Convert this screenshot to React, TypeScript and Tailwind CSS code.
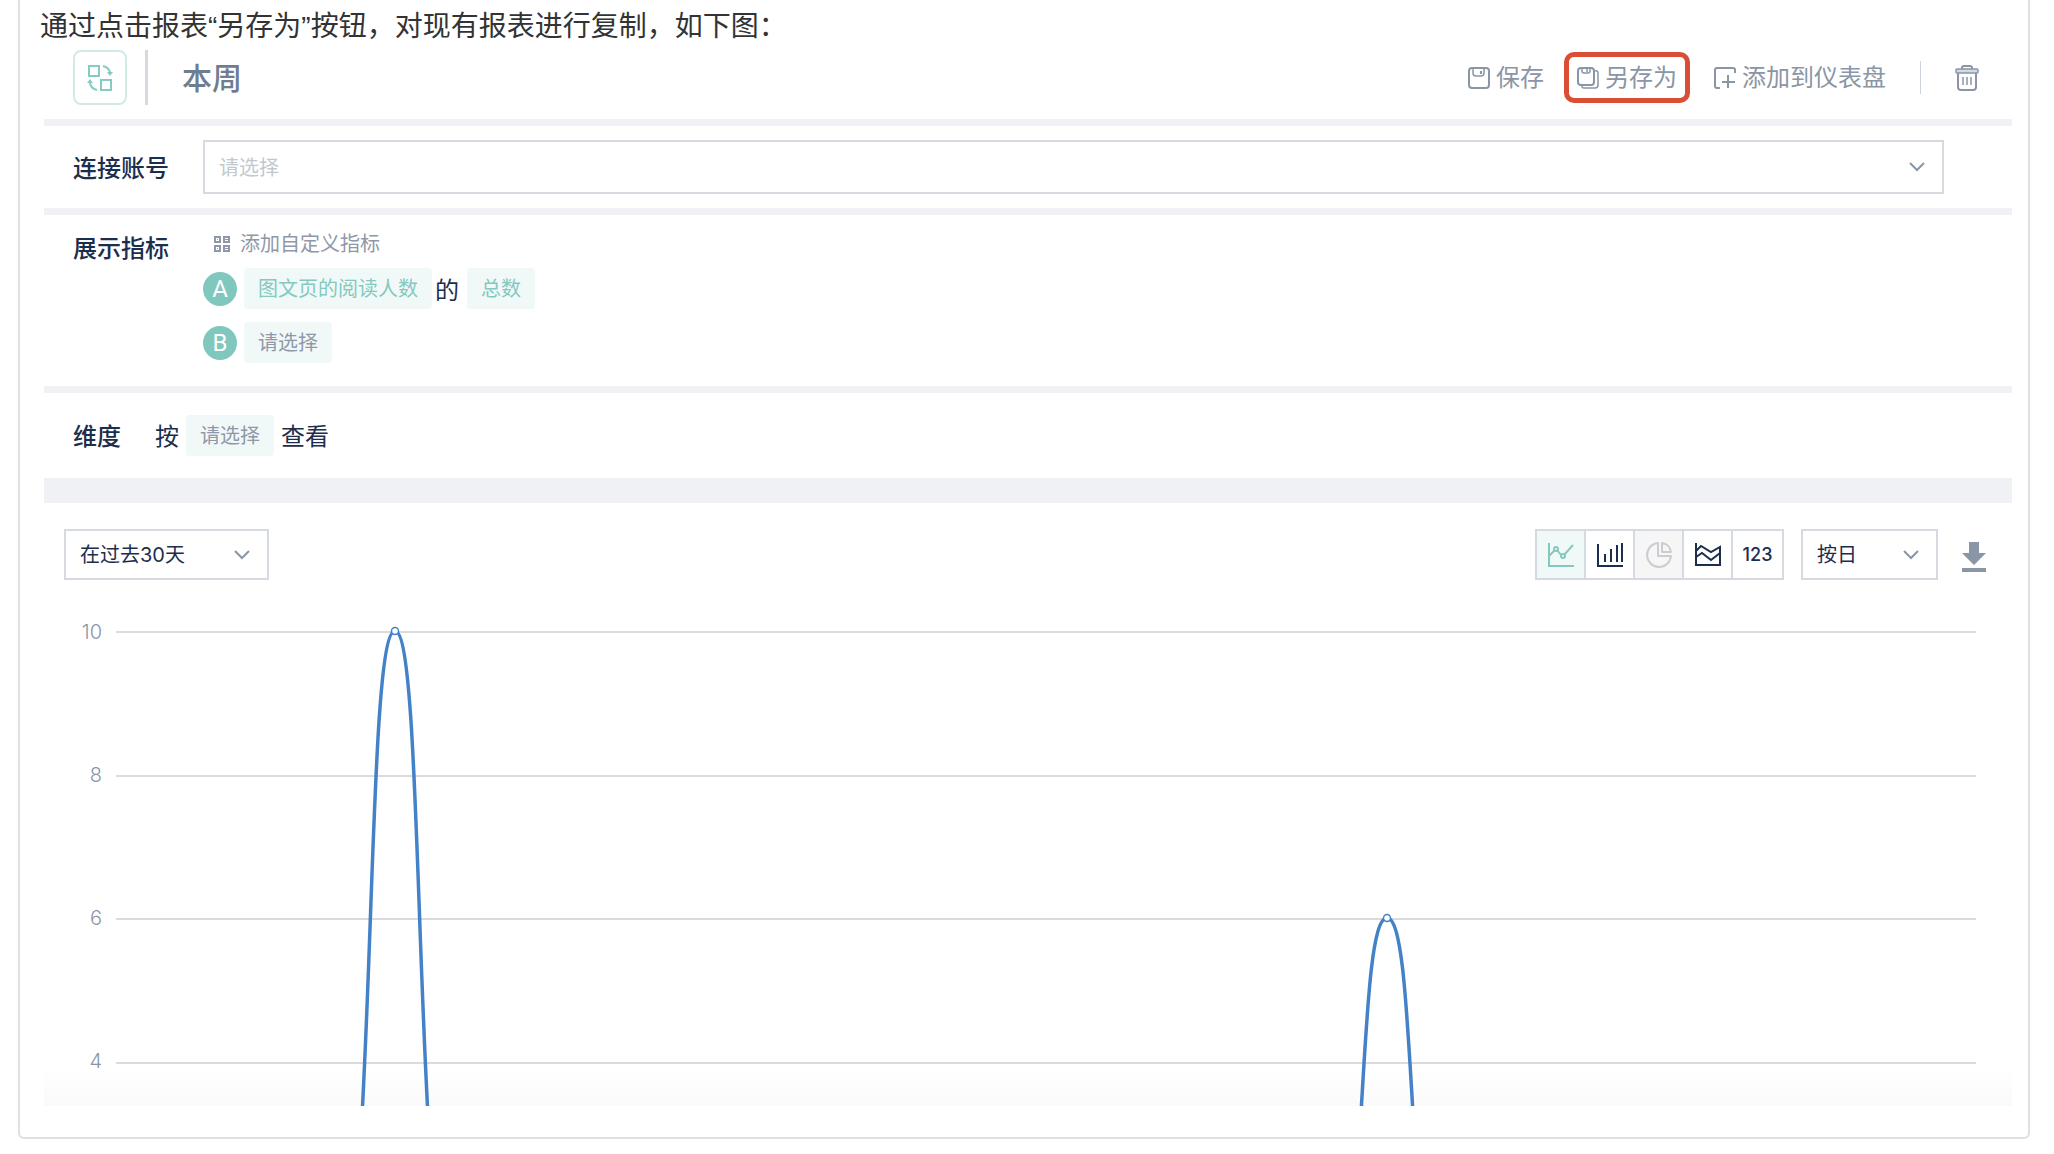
import { ReactNode, useState } from 'react';

const DAYS = 30;
const VALUES: Record<number, number> = { 4: 10, 20: 6 };
const TICKS = [10, 8, 6, 4];

// Plot units: one day is 62 wide, one count is 72 high
const PLOT_WIDTH = 1860;
const PLOT_HEIGHT = 492;
const DAY = PLOT_WIDTH / DAYS;
const TOP = 17;
const yOf = (value: number) => TOP + Math.round((10 - value) * 71.75);
const xOf = (day: number) => (day + 0.5) * DAY;

// Smooth line: flat at the peaks, steep near the baseline
function buildCurve() {
  let d = `M${xOf(0)} ${yOf(0)}`;
  for (let day = 1; day < DAYS; day++) {
    const from = VALUES[day - 1] ?? 0;
    const to = VALUES[day] ?? 0;
    const x0 = xOf(day - 1);
    const x1 = xOf(day);
    const low = Math.max(from, to) * 0.15;
    if (to > from) {
      d += ` C${x1 - 17} ${yOf(low)} ${x1 - 31} ${yOf(to)} ${x1} ${yOf(to)}`;
    } else if (from > to) {
      d += ` C${x0 + 31} ${yOf(from)} ${x0 + 17} ${yOf(low)} ${x1} ${yOf(to)}`;
    } else {
      d += ` L${x1} ${yOf(to)}`;
    }
  }
  return d;
}

function SwapIcon() {
  return (
    <svg viewBox="0 0 26 28" className="w-[26px] h-7" fill="none" stroke="currentColor" strokeWidth="2">
      <rect x="2" y="2" width="10" height="10" />
      <rect x="14" y="16" width="10" height="10" />
      <path d="M16 2c4 1 7 4 7 8" />
      <path d="M10 26c-4-1-7-4-7-8" />
      <path d="M20 8h6l-3 4z M0 19h6l-3-4z" fill="currentColor" stroke="none" />
    </svg>
  );
}

function SaveIcon() {
  return (
    <svg viewBox="0 0 22 22" className="w-[22px] h-[22px]" fill="none" stroke="currentColor" strokeWidth="2">
      <rect x="1" y="1" width="20" height="20" rx="3" />
      <path d="M5 1v5a3 3 0 0 0 3 3h5a3 3 0 0 0 3-3V1" strokeWidth="1.5" />
      <path d="M13 4v3" />
    </svg>
  );
}

function SaveAsIcon() {
  return (
    <svg viewBox="0 0 22 22" className="w-[22px] h-[22px]" fill="none" stroke="currentColor" strokeWidth="2">
      <rect x="1" y="1" width="16" height="17" rx="3" />
      <path d="M5 1v3a2 2 0 0 0 2 2h4a2 2 0 0 0 2-2V1M10 2v3" strokeWidth="1.5" />
      <path d="M18 4a2 2 0 0 1 3 2v12a3 3 0 0 1-3 3H7a2 2 0 0 1-2-2" strokeWidth="1.5" />
    </svg>
  );
}

function AddBoardIcon() {
  return (
    <svg viewBox="0 0 22 22" className="w-[22px] h-[22px]" fill="none" stroke="currentColor" strokeWidth="2">
      <path d="M21 6V3a2 2 0 0 0-2-2H3a2 2 0 0 0-2 2v16a2 2 0 0 0 2 2h3" />
      <path d="M14 8v13M8 15h13" />
    </svg>
  );
}

function TrashIcon() {
  return (
    <svg viewBox="0 0 24 26" className="w-6 h-[26px]" fill="none" stroke="currentColor" strokeWidth="2">
      <path d="M7 4V3a2 2 0 0 1 2-2h6a2 2 0 0 1 2 2v1" />
      <rect x="1" y="4" width="22" height="4" rx="1" fill="#d5dae0" strokeWidth="1.5" />
      <path d="M3 8v14a3 3 0 0 0 3 3h12a3 3 0 0 0 3-3V8" />
      <path d="M8 12v8M12 12v8M16 12v8" strokeWidth="1.5" />
    </svg>
  );
}

function MetricIcon() {
  return (
    <svg viewBox="0 0 16 16" className="w-4 h-4" fill="none" stroke="currentColor" strokeWidth="2">
      <rect x="1" y="1" width="5" height="5" />
      <rect x="10" y="1" width="5" height="5" />
      <rect x="1" y="10" width="5" height="5" />
      <rect x="10" y="10" width="5" height="5" />
      <path d="M3 3.5h1M11 3.5h3M3 12.5h1M11 12.5h3" strokeWidth="1" />
    </svg>
  );
}

function Chevron() {
  return (
    <svg viewBox="0 0 16 10" className="w-4 h-[10px] text-[#8a95a5]" fill="none" stroke="currentColor" strokeWidth="2">
      <path d="M1 1l7 7 7-7" />
    </svg>
  );
}

function LineIcon() {
  return (
    <svg viewBox="0 0 26 26" className="w-[26px] h-[26px]" fill="none" stroke="currentColor" strokeWidth="2">
      <path d="M1 1v23h25" />
      <path d="M1 14l6-6M9 8l4 5M16 13l9-10" />
      <circle cx="8" cy="7" r="2" />
      <circle cx="15" cy="14" r="2" />
    </svg>
  );
}

function BarIcon() {
  return (
    <svg viewBox="0 0 26 26" className="w-[26px] h-[26px]" fill="none" stroke="currentColor" strokeWidth="2">
      <path d="M1 2v22h25M8 12v8M14 7v13M20 3v17M25 1v19" />
    </svg>
  );
}

function PieIcon() {
  return (
    <svg viewBox="0 0 28 28" className="w-7 h-7" fill="none" stroke="currentColor" strokeWidth="2" strokeLinejoin="round">
      <path d="M13 2a12 12 0 1 0 13 13H13z" />
      <path d="M17 2v9h9a10 10 0 0 0-9-9z" />
    </svg>
  );
}

function AreaIcon() {
  return (
    <svg viewBox="0 0 26 26" className="w-[26px] h-[26px]" fill="none" stroke="currentColor" strokeWidth="2">
      <path d="M1 1v22h24V5l-9 5-10-6-5 5" />
      <path d="M1 15l6-4 9 7 9-7" />
    </svg>
  );
}

function DownloadIcon() {
  return (
    <svg viewBox="0 0 24 30" className="w-6 h-[30px]" fill="currentColor">
      <path d="M7 0h10v11h7L12 23 0 11h7z" />
      <rect x="0" y="26" width="24" height="4" />
    </svg>
  );
}

function Pill({ children, muted = false }: { children: ReactNode; muted?: boolean }) {
  return (
    <button
      className={`h-[41px] px-[14px] rounded bg-[#f1f9f8] text-xl leading-6 ${
        muted ? 'text-[#8f98a8]' : 'text-[#84c9c0]'
      }`}
    >
      {children}
    </button>
  );
}

function Badge({ children }: { children: ReactNode }) {
  return (
    <span className="w-[34px] h-[34px] mr-[7px] rounded-full bg-[#80c7be] text-white text-2xl leading-[34px] text-center font-['Roboto']">
      {children}
    </span>
  );
}

interface SelectBoxProps {
  label: string;
  options: string[];
  className: string;
  placeholder?: boolean;
}

function SelectBox({ label, options, className, placeholder = false }: SelectBoxProps) {
  return (
    <div className={`grid items-center ${className}`}>
      <select
        aria-label={label}
        className={`col-start-1 row-start-1 w-full h-full appearance-none bg-white border-2 border-[#d5dae0] px-[14px] text-xl font-['Inter','Noto_Sans_CJK_SC',sans-serif] ${
          placeholder ? 'pt-[2px] text-[#c3c8ce]' : 'text-[#1c2e4d]'
        }`}
      >
        {options.map((option) => (
          <option key={option}>{option}</option>
        ))}
      </select>
      <span className="col-start-1 row-start-1 justify-self-end mr-[19px] pointer-events-none">
        <Chevron />
      </span>
    </div>
  );
}

const CHART_TYPES = [
  { id: 'line', label: '折线图', icon: <LineIcon /> },
  { id: 'bar', label: '柱状图', icon: <BarIcon /> },
  { id: 'pie', label: '饼图', icon: <PieIcon />, disabled: true },
  { id: 'area', label: '面积图', icon: <AreaIcon /> },
  { id: 'number', label: '数值', icon: <span className="text-lg font-medium font-['Inter']">123</span> },
];

function ReportHeader() {
  return (
    <header className="flex items-center h-[81px] pt-3 pb-[14px] pl-[29px] pr-[33px] text-2xl text-[#8a95a5]">
      <button
        aria-label="切换"
        className="w-[54px] h-[55px] flex items-center justify-center border-2 border-[#cfeae7] rounded-lg text-[#86cac2]"
      >
        <SwapIcon />
      </button>
      <span className="w-[3px] h-[55px] ml-[18px] bg-[#d5dae0]" />
      <h1 className="ml-[34px] pt-[2px] text-3xl font-medium text-[#6f7d91]">本周</h1>
      <div className="ml-auto flex items-center">
        <button className="flex items-center gap-[6px]">
          <SaveIcon />
          保存
        </button>
        <button className="ml-5 h-[51px] px-2 flex items-center gap-[6px] border-5 border-[#d94e34] rounded-[10px]">
          <SaveAsIcon />
          另存为
        </button>
        <button className="ml-6 flex items-center gap-[6px]">
          <AddBoardIcon />
          添加到仪表盘
        </button>
        <span className="w-px h-[33px] mx-[34px] bg-[#cdd3da]" />
        <button aria-label="删除">
          <TrashIcon />
        </button>
      </div>
    </header>
  );
}

function Chart() {
  return (
    <div className="flex h-[492px] overflow-hidden mt-[34px] pr-9">
      <div className="w-[72px] shrink-0 pr-[14px] pt-1 text-right text-xl font-light text-[#8a95a5] font-['Inter']">
        {TICKS.map((tick) => (
          <div key={tick} className="h-[143px] leading-7">
            {tick}
          </div>
        ))}
      </div>
      <svg
        viewBox={`0 0 ${PLOT_WIDTH} ${PLOT_HEIGHT}`}
        preserveAspectRatio="none"
        className="flex-1 min-w-0 h-full"
        role="img"
        aria-label="图文页的阅读人数"
      >
        {TICKS.map((tick) => (
          <path key={tick} d={`M0 ${yOf(tick) + 1}H${PLOT_WIDTH}`} stroke="#d9dbdd" strokeWidth="2" />
        ))}
        <path d={buildCurve()} fill="none" stroke="#4482c8" strokeWidth="3.5" />
        {Object.entries(VALUES).map(([day, value]) => (
          <circle key={day} cx={xOf(Number(day))} cy={yOf(value)} r="3.5" fill="#fff" stroke="#4482c8" strokeWidth="1.5" />
        ))}
      </svg>
    </div>
  );
}

export default function App() {
  const [chartType, setChartType] = useState('line');

  return (
    <div className="bg-white pb-[15px] font-['Liberation_Sans','Noto_Sans_CJK_SC',sans-serif]">
      <main className="mr-6 ml-[18px] border-2 border-t-0 border-[#e0dfe6] rounded-b-md pl-6 pr-4 pb-[31px]">
        <p className="-ml-1 h-[38px] pt-[6px] text-[28px] leading-[42px] text-[#333]">
          通过点击报表“另存为”按钮，对现有报表进行复制，如下图：
        </p>

        <section className="text-[#1c2e4d]">
          <ReportHeader />

          {/* Account */}
          <div className="flex items-center h-[96px] border-t-7 border-b-7 border-[#f0f1f5] pl-[29px] pr-[68px]">
            <span className="w-[130px] shrink-0 pt-1 text-2xl font-medium">连接账号</span>
            <SelectBox label="连接账号" options={['请选择']} placeholder className="flex-1 h-[54px]" />
          </div>

          {/* Metrics */}
          <div className="flex h-[178px] border-b-7 border-[#f0f1f5] pl-[29px]">
            <span className="w-[130px] shrink-0 pt-4 text-2xl leading-9 font-medium">展示指标</span>
            <div>
              <button className="flex items-center gap-[10px] mt-[13px] ml-[11px] h-8 text-xl text-[#8f98a8]">
                <MetricIcon />
                添加自定义指标
              </button>
              <div className="flex items-center mt-2">
                <Badge>A</Badge>
                <Pill>图文页的阅读人数</Pill>
                <span className="ml-[3px] mr-2 pt-1 text-2xl">的</span>
                <Pill>总数</Pill>
              </div>
              <div className="flex items-center mt-[13px]">
                <Badge>B</Badge>
                <Pill muted>请选择</Pill>
              </div>
            </div>
          </div>

          {/* Dimension */}
          <div className="flex items-center h-[110px] border-b-25 border-[#f0f1f5] pl-[29px] text-2xl">
            <span className="mr-[34px] pt-[3px] font-medium">维度</span>
            <span className="pt-[3px]">按</span>
            <span className="mx-[7px] flex">
              <Pill muted>请选择</Pill>
            </span>
            <span className="pt-[3px]">查看</span>
          </div>

          <div className="bg-linear-to-t from-[#fafafa] to-white to-[39px]">
            <div className="flex items-center pt-[26px] pl-5 pr-[26px]">
              <SelectBox label="时间范围" options={['在过去30天']} className="w-[205px] h-[51px]" />
              <div className="ml-auto flex h-[51px] border-2 border-[#d5dae0] divide-x-2 divide-[#d5dae0]">
                {CHART_TYPES.map((type) => (
                  <button
                    key={type.id}
                    aria-label={type.label}
                    disabled={type.disabled}
                    onClick={() => setChartType(type.id)}
                    className={`w-[49px] flex items-center justify-center ${
                      type.disabled ? 'bg-[#f6f6f6] text-[#cbcdd0]' : chartType === type.id ? 'bg-[#f1f9f8] text-[#84c9c0]' : 'bg-white'
                    }`}
                  >
                    {type.icon}
                  </button>
                ))}
              </div>
              <SelectBox label="时间粒度" options={['按日']} className="ml-[17px] w-[137px] h-[51px]" />
              <button aria-label="下载" className="ml-6 pt-1 text-[#8a95a5]">
                <DownloadIcon />
              </button>
            </div>
            <Chart />
          </div>
        </section>
      </main>
    </div>
  );
}
